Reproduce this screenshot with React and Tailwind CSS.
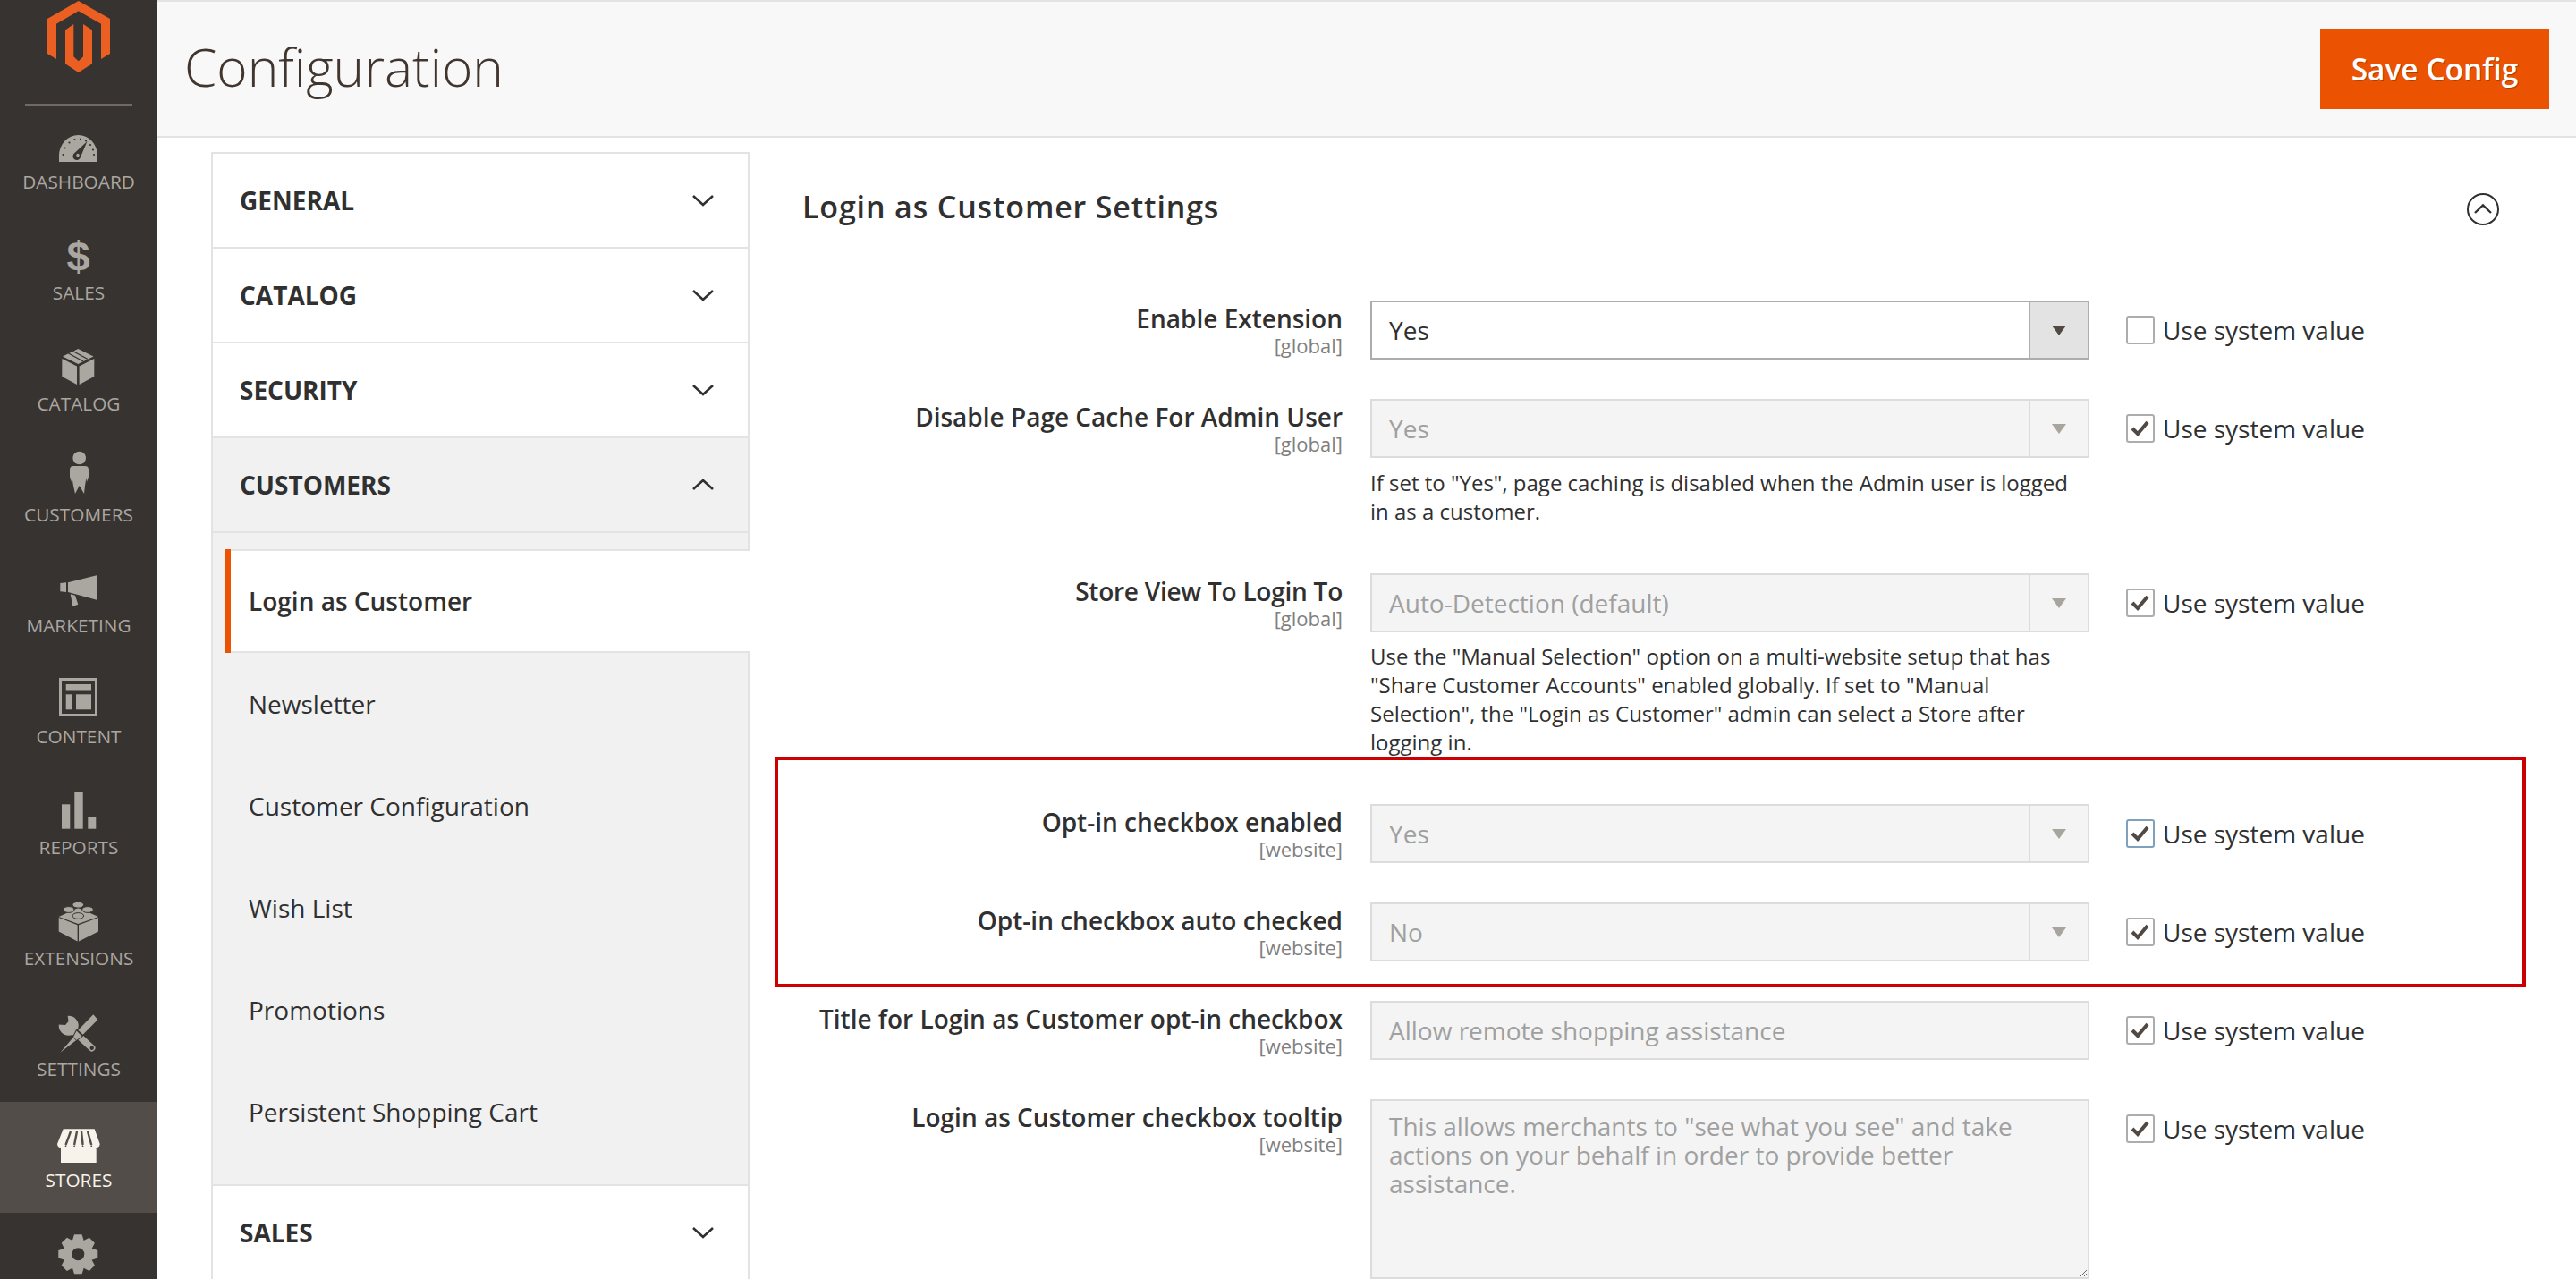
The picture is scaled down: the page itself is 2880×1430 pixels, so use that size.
import React from 'react';

const DARK = '#373330';

const Chevron = ({ up }) => (
  <svg width="26" height="14" viewBox="0 0 26 14" className="shrink-0">
    <path d={up ? 'M2 12 L13 2 L24 12' : 'M2 2 L13 12 L24 2'} fill="none" stroke="#303030" strokeWidth="2.6" />
  </svg>
);

const Logo = () => (
  <svg width="72" height="84" viewBox="53 0 72 84" className="shrink-0">
    <path fill="#eb5f22" d="M88.7 1 L124 21 V60 L114 66 V26.7 L88.7 12.3 L64 26.7 V66 L54 60 V21 Z" />
    <path fill="#eb5f22" d="M74 33.5 L83.3 27 V63.3 L88.7 68.3 L94 63.3 V27 L104 33.5 V71.3 L88.7 81 L74 71.3 Z" />
  </svg>
);

const ICON_FILL = '#aaa6a0';

const icons = {
  dashboard: (
    <>
      <path fill={ICON_FILL} d="M8 53 V46 A21.5 23 0 0 1 51 46 V53 Z" />
      <path fill={DARK} d="M39.5 30 L32 47.5 A4.3 4.3 0 1 1 25.5 43 Z" />
      <circle cx="29" cy="45.5" r="1.7" fill={ICON_FILL} />
      {[[12.5, 45], [14.5, 37.5], [19.5, 31.5], [25.5, 28], [32, 27.5], [38, 29.5], [43, 34], [46, 39.5], [47, 45]].map(([x, y]) => (
        <circle key={x} cx={x} cy={y} r="1.1" fill={DARK} />
      ))}
    </>
  ),
  sales: (
    <text x="29.5" y="51" textAnchor="middle" fontFamily="'Liberation Sans', sans-serif" fontWeight="700" fontSize="47" fill={ICON_FILL}>$</text>
  ),
  catalog: (
    <>
      <path fill={ICON_FILL} d="M11.3 25 L28 33.5 V54 L11.3 45 Z" />
      <path fill={ICON_FILL} d="M30.6 33.5 L47.3 25 V45 L30.6 54 Z" />
      <path fill={ICON_FILL} d="M29.3 14 L46.5 22.5 L29.3 31 L12 22.5 Z" />
      <path stroke={DARK} strokeWidth="1.4" d="M23.5 16.5 L40 25.5 M18.5 19 L35 28" />
    </>
  ),
  customers: (
    <>
      <circle cx="30.7" cy="12" r="7.3" fill={ICON_FILL} />
      <path fill={ICON_FILL} d="M24 21 H37 Q41 21 41 25 V33 L39 39 L38.5 34 L37 43 L36 52 L30.7 43 L26 52 L24 43 L22.5 34 L22 39 L20 33 V25 Q20 21 24 21 Z" />
    </>
  ),
  marketing: (
    <>
      <path fill={ICON_FILL} d="M9.3 28 L16 27.3 V38 L9.3 37.3 Z" />
      <path fill={ICON_FILL} d="M18 27.3 L51 19 V47 L18 38 Z" />
      <path fill={ICON_FILL} d="M20.7 40.3 L26 41.7 L29.3 51.7 L23.3 54 Z" />
    </>
  ),
  content: (
    <>
      <rect x="9.5" y="11.5" width="40" height="40" fill="none" stroke={ICON_FILL} strokeWidth="3" />
      <rect x="15.7" y="17" width="28.3" height="7.5" fill={ICON_FILL} />
      <rect x="15.7" y="28.3" width="7.3" height="17" fill={ICON_FILL} />
      <rect x="27" y="28.3" width="17" height="17" fill={ICON_FILL} />
    </>
  ),
  reports: (
    <>
      <rect x="11" y="27.3" width="9.3" height="27.4" fill={ICON_FILL} />
      <rect x="25.3" y="14" width="9.4" height="40.7" fill={ICON_FILL} />
      <rect x="40.3" y="41" width="9" height="13.7" fill={ICON_FILL} />
    </>
  ),
  extensions: (
    <>
      <path fill={ICON_FILL} d="M7.7 30 L28.6 38.3 V56.5 L7.7 45.5 Z" />
      <path fill={ICON_FILL} d="M30 38.3 L52 30 V45.5 L30 56.5 Z" />
      <path fill={ICON_FILL} d="M29.3 19 L52 29 L29.3 37 L7.7 29 Z" />
      {[[29.3, 15.7], [18.7, 21], [40, 21], [29.3, 28]].map(([x, y]) => (
        <ellipse key={x + y} cx={x} cy={y} rx="6.3" ry="3.4" fill={ICON_FILL} stroke={DARK} strokeWidth="1" />
      ))}
    </>
  ),
  settings: (
    <>
      <path fill="none" stroke={ICON_FILL} strokeWidth="7.5" strokeLinecap="round" d="M20 29 L44.7 51.7" />
      <circle cx="18.7" cy="26.7" r="11" fill={ICON_FILL} />
      <path fill={DARK} d="M3 12 L17.5 14.5 L18.5 22 L15 26 L7 25.5 Z" />
      <circle cx="44.7" cy="51.7" r="2.2" fill={DARK} />
      <path fill={ICON_FILL} stroke={DARK} strokeWidth="2.5" paintOrder="stroke" d="M46.3 14.3 L51.3 20 L34.7 36.7 L29.3 31.7 Z" />
      <path fill={ICON_FILL} stroke={DARK} strokeWidth="2" paintOrder="stroke" d="M27.5 32.5 L33.5 38.5 L27 43.3 L23.7 40 Z" />
      <path fill={ICON_FILL} stroke={DARK} strokeWidth="1.5" paintOrder="stroke" d="M23.7 40 L27 43.3 L9.3 56.7 Z" />
    </>
  ),
  stores: (
    <>
      <rect x="10" y="38" width="39.7" height="18" fill="#f7f3eb" />
      <path fill="#f7f3eb" d="M12.7 18.3 H47.7 L53.7 35 A4.77 4.77 0 0 1 44.2 35 A4.77 4.77 0 0 1 34.6 35 A4.77 4.77 0 0 1 25.1 35 A4.77 4.77 0 0 1 15.5 35 A4.77 4.77 0 0 1 6 35 Z" />
      <path stroke="#524d49" strokeWidth="2.4" d="M21 21 L15.5 36 M28 21 L25.1 36 M33 21 L34.6 36 M40 21 L44.2 36" />
      <path stroke="#524d49" strokeWidth="1.4" fill="none" d="M6 40 H10 M49.7 40 H54" />
    </>
  ),
  system: (
    <>
      <circle cx="29.3" cy="34.3" r="11.5" fill="none" stroke={ICON_FILL} strokeWidth="9" />
      {[0, 45, 90, 135, 180, 225, 270, 315].map((a) => (
        <path key={a} fill={ICON_FILL} transform={`rotate(${a} 29.3 34.3)`} d="M25 12.3 H33.6 L36 20 H22.6 Z" />
      ))}
    </>
  ),
};

const menu = [
  { id: 'dashboard', label: 'DASHBOARD' },
  { id: 'sales', label: 'SALES' },
  { id: 'catalog', label: 'CATALOG' },
  { id: 'customers', label: 'CUSTOMERS' },
  { id: 'marketing', label: 'MARKETING' },
  { id: 'content', label: 'CONTENT' },
  { id: 'reports', label: 'REPORTS' },
  { id: 'extensions', label: 'EXTENSIONS' },
  { id: 'settings', label: 'SETTINGS' },
  { id: 'stores', label: 'STORES', active: true },
  { id: 'system' },
];

const Sidebar = () => (
  <aside className="w-[176px] shrink-0 bg-[#373330] h-full overflow-hidden">
    <div className="h-[118px] flex flex-col items-center">
      <Logo />
      <div className="mt-auto w-[120px] h-[2px] bg-[#736963]" />
    </div>
    <div className="-mt-[2px]">
      {menu.map((m) => (
        <div key={m.id} className={`h-[124px] pt-[12px] flex flex-col items-center ${m.active ? 'bg-[#524d49] text-[#f7f3eb]' : 'text-[#aaa6a0]'}`}>
          <svg width="60" height="60" viewBox="0 0 60 60" className="shrink-0">{icons[m.id]}</svg>
          {m.label && <div className="text-[20.8px] leading-[30px]">{m.label}</div>}
        </div>
      ))}
    </div>
  </aside>
);

const NavHead = ({ label, open }) => (
  <div className={`h-[106px] border-b-2 border-[#e3e3e3] pl-[30px] pr-[37px] flex items-center justify-between text-[28px] font-bold text-[#303030] ${open ? 'bg-[#f1f1f1]' : ''}`}>
    {label}
    <Chevron up={open} />
  </div>
);

const subItems = ['Newsletter', 'Customer Configuration', 'Wish List', 'Promotions', 'Persistent Shopping Cart'];

const ConfigNav = () => (
  <nav className="w-[602px] shrink-0 ml-[60px] mt-[16px] border-x-2 border-t-2 border-[#e3e3e3] text-[#303030]">
    <NavHead label="GENERAL" />
    <NavHead label="CATALOG" />
    <NavHead label="SECURITY" />
    <NavHead label="CUSTOMERS" open />
    <div className="bg-[#f1f1f1]">
      <div className="h-[18px]" />
      <div className="h-[116px] ml-[14px] -mr-[2px] flex relative">
        <div className="w-[6px] bg-[#eb5202]" />
        <div className="flex-1 bg-white border-y-2 border-[#e3e3e3] flex items-center pl-[20px] text-[28px] font-semibold">
          Login as Customer
        </div>
      </div>
      <div className="pb-[24px]">
        {subItems.map((s) => (
          <div key={s} className="h-[114px] flex items-center pl-[40px] text-[28px]">{s}</div>
        ))}
      </div>
    </div>
    <div className="border-t-2 border-[#e3e3e3]">
      <NavHead label="SALES" />
    </div>
  </nav>
);

const Check = ({ checked, focus }) => (
  <span className={`w-[32px] h-[32px] border-2 rounded-[3px] bg-white flex items-center justify-center shrink-0 ${focus ? 'border-[#7ea1bd]' : 'border-[#adadad]'}`}>
    {checked && (
      <svg width="22" height="20" viewBox="0 0 22 20">
        <path d="M2 10 L8 16 L19 3" fill="none" stroke="#514943" strokeWidth="4" />
      </svg>
    )}
  </span>
);

const SelectBox = ({ value, disabled }) => (
  <div className={`h-[66px] border-2 flex text-[28px] ${disabled ? 'border-[#dcdcdc] bg-[#f4f4f4] text-[#a0a0a0]' : 'border-[#adadad] bg-white text-[#303030]'}`}>
    <div className="flex-1 pl-[19px] flex items-center">{value}</div>
    <div className={`w-[66px] border-l-2 flex items-center justify-center ${disabled ? 'border-[#dcdcdc]' : 'border-[#adadad] bg-[#e3e3e3]'}`}>
      <svg width="16" height="11" viewBox="0 0 16 11">
        <path d="M0 0 H16 L8 11 Z" fill={disabled ? '#a8a59f' : '#514943'} />
      </svg>
    </div>
  </div>
);

const Row = ({ label, labelClass = '', scope, checked = true, focus, note, noteClass, children }) => (
  <div className="flex items-start mb-[44px]">
    <div className="w-[604px] shrink-0 text-right">
      <div className={`text-[28px] leading-[40px] font-semibold text-[#303030] ${labelClass}`}>{label}</div>
      <div className="text-[22px] leading-[20px] text-[#808080]">{scope}</div>
    </div>
    <div className="w-[804px] shrink-0 ml-[31px]">
      {children}
      {note && <div className={`text-[24px] leading-[32px] text-[#303030] ${noteClass}`}>{note}</div>}
    </div>
    <label className="ml-[41px] h-[66px] flex items-center gap-[9px] text-[28px] text-[#303030] whitespace-nowrap">
      <Check checked={checked} focus={focus} />
      Use system value
    </label>
  </div>
);

const SettingsForm = () => (
  <section className="relative flex-1 pl-[59px]">
    <div className="flex items-center justify-between h-[154px] pr-[85px] mb-[28px]">
      <h2 className="text-[34px] mt-[1px] font-semibold text-[#303030] tracking-[0.85px]">Login as Customer Settings</h2>
      <svg width="38" height="38" viewBox="0 0 38 38" className="mt-[6px]">
        <circle cx="19" cy="19" r="17" fill="none" stroke="#303030" strokeWidth="2" />
        <path d="M10 23 L19 14.5 L28 23" fill="none" stroke="#303030" strokeWidth="2.4" />
      </svg>
    </div>
    <Row label="Enable Extension" scope="[global]" checked={false}>
      <SelectBox value="Yes" />
    </Row>
    <Row label="Disable Page Cache For Admin User" scope="[global]" note={'If set to "Yes", page caching is disabled when the Admin user is logged in as a customer.'} noteClass="mt-[12px] pb-[9px]">
      <SelectBox value="Yes" disabled />
    </Row>
    <Row label="Store View To Login To" labelClass="tracking-[-0.25px]" scope="[global]" note={'Use the "Manual Selection" option on a multi-website setup that has "Share Customer Accounts" enabled globally. If set to "Manual Selection", the "Login as Customer" admin can select a Store after logging in.'} noteClass="mt-[11px] pb-[9px]">
      <SelectBox value="Auto-Detection (default)" disabled />
    </Row>
    <Row label="Opt-in checkbox enabled" scope="[website]" focus>
      <SelectBox value="Yes" disabled />
    </Row>
    <Row label="Opt-in checkbox auto checked" scope="[website]">
      <SelectBox value="No" disabled />
    </Row>
    <Row label="Title for Login as Customer opt-in checkbox" scope="[website]">
      <div className="h-[66px] border-2 border-[#dcdcdc] bg-[#f4f4f4] text-[28px] text-[#a0a0a0] pl-[19px] flex items-center">Allow remote shopping assistance</div>
    </Row>
    <Row label="Login as Customer checkbox tooltip" scope="[website]">
      <textarea
        disabled
        className="block w-full h-[201px] border-2 border-[#dcdcdc] bg-[#f4f4f4] text-[28px] leading-[32px] text-[#a0a0a0] pl-[19px] pr-[18px] pt-[12px] resize opacity-100"
        defaultValue={'This allows merchants to "see what you see" and take actions on your behalf in order to provide better assistance.'}
      />
    </Row>
    {/* red highlight drawn over the two opt-in rows */}
    <div className="absolute left-[28px] top-[692px] w-[1958px] h-[258px] border-4 border-[#cc0000] pointer-events-none" />
  </section>
);

export default function App() {
  return (
    <div className="w-[2880px] h-[1430px] flex overflow-hidden bg-white font-['Open_Sans',sans-serif]">
      <Sidebar />
      <main className="flex-1 min-w-0">
        <header className="h-[154px] border-y-2 border-[#e3e3e3] bg-[#f8f8f8] flex items-center justify-between pl-[30px] pr-[30px]">
          <h1 className="text-[58.6px] -mt-[4px] font-light text-[#41362f]">Configuration</h1>
          <button className="w-[256px] h-[90px] bg-[#eb5202] text-white text-[33.5px] font-semibold [text-shadow:1px_1px_0_rgba(0,0,0,0.25)]">Save Config</button>
        </header>
        <div className="flex">
          <ConfigNav />
          <SettingsForm />
        </div>
      </main>
    </div>
  );
}
